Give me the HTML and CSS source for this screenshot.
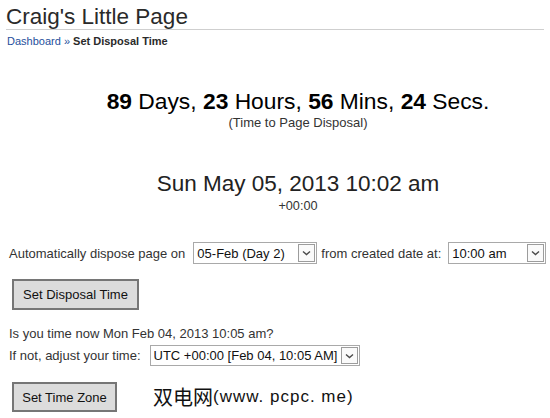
FILE: index.html
```html
<!DOCTYPE html>
<html>
<head>
<meta charset="utf-8">
<title>Craig's Little Page</title>
<link rel="stylesheet" href="styles.css">
</head>
<body>
<header class="header">
  <h1 class="title">Craig's Little Page</h1>
  <div class="crumbs"><a class="crumb-link" href="#">Dashboard</a> <span class="crumb-sep">»</span> <span class="crumb-current">Set Disposal Time</span></div>
</header>

<section class="center">
  <div class="countdown"><b>89</b> Days, <b>23</b> Hours, <b>56</b> Mins, <b>24</b> Secs.</div>
  <div class="caption">(Time to Page Disposal)</div>
  <div class="date">Sun May 05, 2013 10:02 am</div>
  <div class="offset">+00:00</div>
</section>

<form class="form">
  <div class="row row-dispose">
    <span class="label">Automatically dispose page on</span>
    <span class="sel sel-day">
      <select class="sel-input"><option>05-Feb (Day 2)</option></select>
      <span class="sel-arrow"><svg width="9" height="6" viewBox="0 0 9 6"><path d="M1 1.5 L4.5 4.5 L8 1.5" fill="none" stroke="#4a4a4a" stroke-width="1.4"/></svg></span>
    </span>
    <span class="label label-mid">from created date at:</span>
    <span class="sel sel-time">
      <select class="sel-input"><option>10:00 am</option></select>
      <span class="sel-arrow"><svg width="9" height="6" viewBox="0 0 9 6"><path d="M1 1.5 L4.5 4.5 L8 1.5" fill="none" stroke="#4a4a4a" stroke-width="1.4"/></svg></span>
    </span>
  </div>
  <div class="btn-row btn-row-first">
    <button type="button" class="btn btn-disposal">Set Disposal Time</button>
  </div>

  <p class="question">Is you time now Mon Feb 04, 2013 10:05 am?</p>
  <div class="row row-zone">
    <span class="label">If not, adjust your time:</span>
    <span class="sel sel-zone">
      <select class="sel-input"><option>UTC +00:00 [Feb 04, 10:05 AM]</option></select>
      <span class="sel-arrow"><svg width="9" height="6" viewBox="0 0 9 6"><path d="M1 1.5 L4.5 4.5 L8 1.5" fill="none" stroke="#4a4a4a" stroke-width="1.4"/></svg></span>
    </span>
  </div>
  <div class="btn-row btn-row-second">
    <button type="button" class="btn btn-zone">Set Time Zone</button>
    <span class="watermark"><span class="wm-cjk">双电网</span><span class="wm-lat">(www. pcpc. me)</span></span>
  </div>
</form>
</body>
</html>
```

FILE: styles.css
```css
html, body {
  margin: 0;
  padding: 0;
  background: #fff;
}
body {
  font-family: "Liberation Sans", Arial, sans-serif;
  color: #333;
  width: 550px;
  overflow: hidden;
}
.header {
  padding: 0 6px;
}
.title {
  margin: 5px 0 0;
  font-size: 22.5px;
  font-weight: normal;
  line-height: 24px;
  color: #2a2a2a;
  border-bottom: 1px solid #cfcfcf;
}
.crumbs {
  margin-top: 4px;
  font-size: 11px;
  line-height: 14px;
  padding-left: 1px;
}
.crumb-link, .crumb-sep {
  color: #1f4f9c;
  text-decoration: none;
}
.crumb-current {
  font-weight: bold;
  color: #2a2a2a;
}
.center {
  padding-left: 46px;
  text-align: center;
}
.countdown {
  margin-top: 42px;
  font-size: 22.8px;
  line-height: 22px;
  color: #000;
}
.caption {
  margin-top: 3px;
  font-size: 13px;
  line-height: 15px;
  color: #333;
}
.date {
  margin-top: 42px;
  font-size: 22.5px;
  line-height: 24px;
  color: #222;
}
.offset {
  margin-top: 4px;
  font-size: 12.7px;
  line-height: 12px;
  color: #333;
}
.form {
  margin: 0;
  padding-left: 9px;
  font-size: 13px;
}
.row {
  display: flex;
  align-items: center;
}
.row-dispose {
  margin-top: 30px;
  height: 22px;
}
.label {
  line-height: 15px;
  color: #333;
  white-space: nowrap;
}
.label-mid {
  margin-left: 4px;
}
.sel {
  display: inline-flex;
  box-sizing: border-box;
  height: 22px;
  border: 1px solid #a9a9a9;
  background: #fff;
  padding: 1px;
  margin-left: 8px;
}
.sel-day { width: 124px; }
.sel-time { width: 98px; margin-left: 7px; }
.sel-zone { width: 210px; height: 21px; margin-left: 9px; }
.sel-input {
  -webkit-appearance: none;
  appearance: none;
  flex: 1;
  min-width: 0;
  border: none;
  outline: none;
  background: transparent;
  margin: 0;
  padding: 0 0 0 2px;
  font-family: "Liberation Sans", Arial, sans-serif;
  font-size: 13px;
  color: #111;
}
.sel-arrow {
  box-sizing: border-box;
  width: 17px;
  display: flex;
  align-items: center;
  justify-content: center;
  border: 1px solid #9c9c9c;
  background: #fafafa;
}
.btn-row {
  display: flex;
  align-items: center;
}
.btn-row-first {
  margin-top: 15px;
}
.btn {
  box-sizing: border-box;
  margin: 0 0 0 3px;
  height: 31px;
  padding: 0 5px;
  border: 2px solid #767676;
  background: #dcdcdc;
  font-family: "Liberation Sans", Arial, sans-serif;
  font-size: 13px;
  color: #111;
  border-radius: 0;
}
.btn-disposal { width: 127px; }
.btn-zone { width: 105px; height: 30px; }
.question {
  margin: 16px 0 0;
  line-height: 15px;
  color: #333;
}
.row-zone {
  margin-top: 4px;
  height: 21px;
}
.btn-row-second {
  margin-top: 16px;
}
.watermark {
  margin-left: 36px;
  color: #111;
  white-space: nowrap;
  display: flex;
  align-items: center;
}
.wm-cjk {
  font-family: "Noto Sans CJK SC", sans-serif;
  font-size: 20px;
  line-height: 24px;
}
.wm-lat {
  font-family: "Liberation Sans", Arial, sans-serif;
  font-size: 17px;
  line-height: 24px;
  letter-spacing: 1px;
}
```
